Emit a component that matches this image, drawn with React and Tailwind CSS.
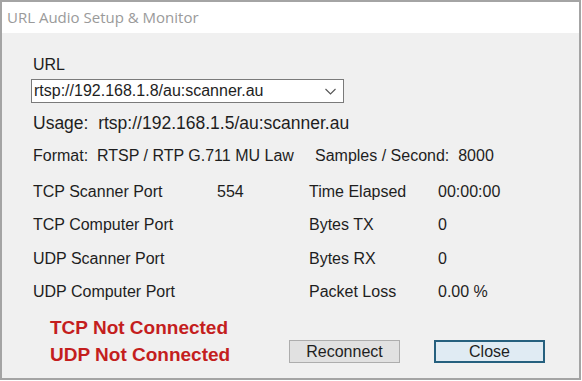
import React from 'react';

const rows = [
  ['TCP Scanner Port', '554', 'Time Elapsed', '00:00:00'],
  ['TCP Computer Port', '', 'Bytes TX', '0'],
  ['UDP Scanner Port', '', 'Bytes RX', '0'],
  ['UDP Computer Port', '', 'Packet Loss', '0.00 %'],
];

const Chevron = () => (
  <svg width="11" height="7" viewBox="0 0 11 7" fill="none">
    <path d="M0.5 1l5 5 5-5" stroke="#555" strokeWidth="1.1" />
  </svg>
);

export default function App() {
  return (
    <div className="w-[582px] h-[381px] bg-white" style={{ fontFamily: '"Liberation Sans", Arial, sans-serif' }}>
      <div className="w-[581px] h-[380px] border-2 border-[#a4a4a4] flex flex-col">
        {/* title bar */}
        <div className="h-[31px] bg-white flex items-center pl-[5px] text-[15px] text-[#9a9a9a]" style={{ fontFamily: '"Open Sans", sans-serif' }}>
          URL Audio Setup &amp; Monitor
        </div>

        <div className="flex-1 bg-[#f0f0f0] pl-[31px] flex flex-col text-[#1e1e1e]">
          <div className="mt-[22px] h-[20px] leading-[20px] text-[16px]">URL</div>

          <div className="mt-[4px] ml-[-2px] w-[313px] h-[24px] bg-white border border-[#7a7a7a] flex items-center justify-between pl-[2px] pr-[7px]">
            <span className="text-[16px] leading-[20px]">rtsp://192.168.1.8/au:scanner.au</span>
            <Chevron />
          </div>

          <div className="mt-[10px] h-[20px] leading-[20px] text-[17.5px] whitespace-pre">Usage:  rtsp://192.168.1.5/au:scanner.au</div>

          <div className="mt-[13px] h-[20px] leading-[20px] text-[16px] flex whitespace-pre">
            <span className="w-[282px]">Format:  RTSP / RTP G.711 MU Law</span>
            <span>Samples / Second:  8000</span>
          </div>

          <div className="mt-[9px] grid grid-cols-[184px_92px_129px_1fr] text-[16px]">
            {rows.map((r) => (
              <React.Fragment key={r[0]}>
                <div className="h-[33.5px] flex items-center">{r[0]}</div>
                <div className="h-[33.5px] flex items-center">{r[1]}</div>
                <div className="h-[33.5px] flex items-center">{r[2]}</div>
                <div className="h-[33.5px] flex items-center">{r[3]}</div>
              </React.Fragment>
            ))}
          </div>

          <div className="flex">
            <div className="pl-[17px] w-[256px] flex flex-col text-[19px] font-bold text-[#c41e1e]">
              <div className="mt-[6px] h-[26px] leading-[26px]">TCP Not Connected</div>
              <div className="mt-[1px] h-[26px] leading-[26px]">UDP Not Connected</div>
            </div>
            <div className="flex gap-[34px] mt-[31px] h-[23px]">
              <button className="w-[111px] h-[23px] bg-[#e1e1e1] border border-[#adadad] text-[16px] leading-[20px]">
                Reconnect
              </button>
              <button className="w-[111px] h-[23px] bg-[#e0ebf3] border-2 border-[#26607e] text-[16px] leading-[18px]">
                Close
              </button>
            </div>
          </div>
        </div>
      </div>
    </div>
  );
}
